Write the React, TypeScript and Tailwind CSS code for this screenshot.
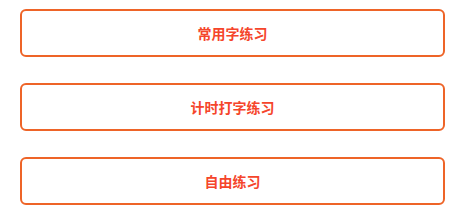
import React from 'react';

const items = ['常用字练习', '计时打字练习', '自由练习'];

export default function App() {
  return (
    <div className="w-[469px] h-[221px] bg-white pl-[20px] pt-[9px] flex flex-col gap-[26px]">
      {items.map(label => (
        <button
          key={label}
          className="w-[425px] h-[48px] rounded-[6px] border-2 border-[#ee6428] bg-white flex items-center justify-center text-[14px] font-bold text-[#f5452b]"
          style={{ fontFamily: '"Noto Sans CJK SC", "Noto Sans", sans-serif' }}
        >
          {label}
        </button>
      ))}
    </div>
  );
}
